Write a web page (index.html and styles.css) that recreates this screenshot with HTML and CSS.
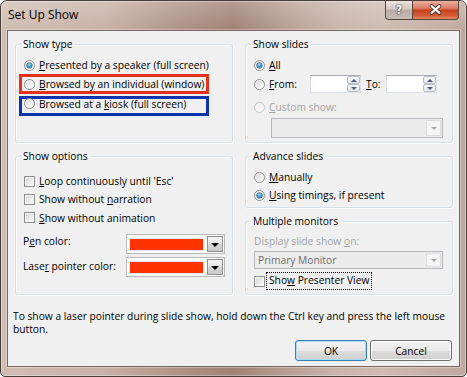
FILE: index.html
```html
<!DOCTYPE html>
<html>
<head>
<meta charset="utf-8">
<title>Set Up Show</title>
<link rel="stylesheet" href="styles.css">
</head>
<body>
<div class="window">
  <div class="titlebar">
    <span class="title">Set Up Show</span>
    <div class="caption-buttons">
      <div class="cbtn help">?</div>
      <div class="cbtn close">
        <svg width="46" height="18" viewBox="0 0 46 18">
          <path d="M19 5 L27 12 M27 5 L19 12" stroke="#4a2a20" stroke-width="4" stroke-linecap="round" fill="none"/>
          <path d="M19 5 L27 12 M27 5 L19 12" stroke="#ffffff" stroke-width="2.2" stroke-linecap="round" fill="none"/>
        </svg>
      </div>
    </div>
  </div>
  <div class="client">
    <div class="groups">
      <fieldset class="group show-type">
        <legend>Show type</legend>
        <div class="opt opt-1"><span class="radio checked"></span><span class="txt"><u>P</u>resented by a speaker (full screen)</span></div>
        <div class="opt opt-2 hl-red"><span class="radio"></span><span class="txt"><u>B</u>rowsed by an individual (window)</span></div>
        <div class="opt opt-3 hl-blue"><span class="radio"></span><span class="txt">Browsed at a <u>k</u>iosk (full screen)</span></div>
      </fieldset>

      <fieldset class="group show-slides">
        <legend>Show slides</legend>
        <div class="row row-all"><span class="radio checked"></span><span class="txt"><u>A</u>ll</span></div>
        <div class="row row-from">
          <span class="radio"></span>
          <span class="txt lbl-from"><u>F</u>rom:</span>
          <div class="spin"><div class="spin-btns"><span class="sb up"></span><span class="sb down"></span></div></div>
          <span class="txt lbl-to"><u>T</u>o:</span>
          <div class="spin"><div class="spin-btns"><span class="sb up"></span><span class="sb down"></span></div></div>
        </div>
        <div class="row row-custom disabled"><span class="radio dis"></span><span class="txt"><u>C</u>ustom show:</span></div>
        <div class="combo combo-custom"><span class="combo-text"></span><span class="combo-arrow"></span></div>
      </fieldset>

      <fieldset class="group show-options">
        <legend>Show options</legend>
        <div class="row chk-row first"><span class="check"></span><span class="txt"><u>L</u>oop continuously until 'Esc'</span></div>
        <div class="row chk-row"><span class="check"></span><span class="txt">Show without <u>n</u>arration</span></div>
        <div class="row chk-row third"><span class="check"></span><span class="txt"><u>S</u>how without animation</span></div>
        <div class="color-row pen">
          <span class="color-label">P<u>e</u>n color:</span>
          <div class="color-pick"><span class="swatch"></span><span class="pick-btn"></span></div>
        </div>
        <div class="color-row laser">
          <span class="color-label">Lase<u>r</u> pointer color:</span>
          <div class="color-pick"><span class="swatch"></span><span class="pick-btn"></span></div>
        </div>
      </fieldset>

      <div class="stack">
        <fieldset class="group advance">
          <legend>Advance slides</legend>
          <div class="row adv-1"><span class="radio"></span><span class="txt"><u>M</u>anually</span></div>
          <div class="row"><span class="radio checked"></span><span class="txt"><u>U</u>sing timings, if present</span></div>
        </fieldset>
        <fieldset class="group monitors">
          <legend>Multiple monitors</legend>
          <div class="disp-label disabled">Display slide show <u>o</u>n:</div>
          <div class="combo combo-monitor"><span class="combo-text">Primary Monitor</span><span class="combo-arrow"></span></div>
          <div class="row presenter"><span class="check"></span><span class="txt focus">Sho<u>w</u> Presenter View</span></div>
        </fieldset>
      </div>
    </div>
    <p class="note">To show a laser pointer during slide show, hold down the Ctrl key and press the left mouse button.</p>
    <div class="actions">
      <button class="btn btn-default">OK</button>
      <button class="btn btn-cancel">Cancel</button>
    </div>
  </div>
</div>
</body>
</html>
```
FILE: styles.css
```css
* { box-sizing: border-box; }
html, body { margin: 0; padding: 0; }
body {
  width: 467px;
  height: 377px;
  overflow: hidden;
  background: #ffffff;
  font-family: "Open Sans", "Noto Sans", sans-serif;
  font-size: 10.25px;
  color: #000;
}
u { text-decoration: underline; text-underline-offset: 1px; }

.window {
  width: 467px;
  height: 377px;
  border: 1px solid #4b3d38;
  border-radius: 7px 7px 5px 5px;
  padding: 0 6px 9px 6px;
  display: flex;
  flex-direction: column;
  background:
    linear-gradient(to bottom, rgba(255,255,255,0.22), rgba(255,255,255,0) 30px),
    linear-gradient(to right, #d0bdb4 0%, #c8b1a6 22%, #ad8f82 40%, #a08173 50%, #b59b8f 60%, #c9b4aa 72%, #cfbbb2 82%, #bfa89d 100%);
  box-shadow: inset 0 0 0 1px rgba(255,255,255,0.35);
}

.titlebar {
  height: 29px;
  display: flex;
  justify-content: space-between;
  align-items: flex-start;
}
.title {
  margin-left: 1px;
  padding-top: 6px;
  font-size: 12px;
  line-height: 16px;
  color: #000;
}
.caption-buttons {
  display: flex;
  margin-right: 1px;
}
.cbtn {
  height: 19px;
  border: 1px solid #5a4740;
  border-top: none;
  display: flex;
  align-items: center;
  justify-content: center;
}
.help {
  width: 27px;
  border-right: none;
  border-radius: 0 0 0 4px;
  background: linear-gradient(to bottom, #ece3df 0%, #d5c8c3 45%, #b9aaa4 50%, #c9bcb7 100%);
  color: #fff;
  font-family: "DejaVu Sans", sans-serif;
  font-weight: bold;
  font-size: 12px;
  text-shadow: 0 0 1px #333, 0 0 1px #333, 0 0 2px #555;
}
.close {
  width: 47px;
  border-radius: 0 0 4px 0;
  background: linear-gradient(to bottom, #eab0a2 0%, #dc7b62 40%, #c8401e 52%, #d45a36 80%, #e58a64 100%);
}

.client {
  flex: 1;
  background: #f0f0f0;
  border: 1px solid #7a675f;
  box-shadow: 0 0 0 1px rgba(255,255,255,0.3);
  padding: 6px 6px 0 7px;
  display: flex;
  flex-direction: column;
}

.groups {
  display: grid;
  grid-template-columns: 218px 208px;
  column-gap: 12px;
  row-gap: 6px;
}

.group {
  margin: 0;
  min-width: 0;
  padding: 0 6px 4px 8px;
  border: 1px solid #d5dfe5;
  border-radius: 3px;
  box-shadow: inset 1px 1px 0 #fff, 1px 1px 0 #fff;
}
.group legend {
  padding: 0 2px;
  margin-left: -3px;
  line-height: 15px;
  font-size: 10.25px;
}

.txt { white-space: nowrap; line-height: 14px; }

/* radios */
.radio {
  flex: none;
  width: 11px;
  height: 11px;
  margin-right: 4px;
  border-radius: 50%;
  border: 1px solid #8e8f8f;
  background: linear-gradient(135deg, #d6d6d6 0%, #f0f0f0 60%, #ffffff 100%);
  box-shadow: inset 0 0 0 1px rgba(255,255,255,0.6);
  position: relative;
}
.radio.checked::after {
  content: "";
  position: absolute;
  left: 2px;
  top: 2px;
  width: 5px;
  height: 5px;
  border-radius: 50%;
  background: radial-gradient(circle at 45% 35%, #b8ecff 0%, #3aa0d8 40%, #0f4c78 100%);
  box-shadow: 0 0 0 0.5px #1c4e70;
}
.radio.dis {
  border-color: #c9c9c9;
  background: #f4f4f4;
  box-shadow: none;
}

/* checkbox */
.check {
  flex: none;
  width: 11px;
  height: 11px;
  margin-right: 4px;
  border: 1px solid #8e8f8f;
  background: linear-gradient(135deg, #d2d2d2 0%, #eeeeee 60%, #fbfbfb 100%);
  box-shadow: inset 0 0 0 1px #f6f6f6;
}

/* show type rows */
.opt {
  display: flex;
  align-items: center;
  width: 190px;
  margin-left: -5px;
  padding-left: 2px;
  border: 3px solid transparent;
}
.opt-1 { margin-top: 4px; height: 18px; }
.opt-2 { height: 20px; }
.opt-3 { margin-top: 2px; height: 20px; padding-bottom: 5px; }
.hl-red { border-color: #e3321c; }
.hl-blue { border-color: #0d33ad; }

/* generic rows */
.row {
  display: flex;
  align-items: center;
  height: 18px;
}
.row-all { margin-top: 4px; }
.row-from { height: 20px; }
.row-custom { margin-top: 4px; }
.disabled { color: #a3a3a3; }

.lbl-from { width: 41px; }
.lbl-to { width: 20px; margin-left: 5px; }

.spin {
  flex: none;
  width: 51px;
  height: 18px;
  background: #fff;
  border: 1px solid #dbdfe6;
  border-top-color: #abadb3;
  display: flex;
  justify-content: flex-end;
}
.spin-btns {
  width: 13px;
  display: flex;
  flex-direction: column;
}
.sb {
  flex: 1;
  border: 1px solid #b7bfc8;
  border-radius: 2px;
  background: linear-gradient(to bottom, #f7f7f7, #e3e5e8);
  display: flex;
  align-items: center;
  justify-content: center;
}
.sb.up::after {
  content: "";
  border-left: 3px solid transparent;
  border-right: 3px solid transparent;
  border-bottom: 3px solid #4b5d7a;
}
.sb.down::after {
  content: "";
  border-left: 3px solid transparent;
  border-right: 3px solid transparent;
  border-top: 3px solid #4b5d7a;
}

/* combos */
.combo {
  display: flex;
  align-items: center;
  justify-content: space-between;
  border: 1px solid #b5b9bd;
  background: #ececec;
  padding: 1px;
}
.combo-custom {
  margin-top: 2px;
  margin-left: 17px;
  width: 172px;
  height: 20px;
}
.combo-monitor {
  margin-top: 3px;
  width: 189px;
  height: 18px;
}
.combo-text {
  padding-left: 2px;
  color: #6f6f6f;
  line-height: 14px;
  white-space: nowrap;
}
.combo-arrow {
  width: 15px;
  height: 100%;
  background: #f5f5f5;
  border: 1px solid #dcdcdc;
  display: flex;
  align-items: center;
  justify-content: center;
}
.combo-arrow::after {
  content: "";
  border-left: 3px solid transparent;
  border-right: 3px solid transparent;
  border-top: 3px solid #a8a8a8;
}

/* show options */
.chk-row.first { margin-top: 8px; }
.chk-row.third { height: 19px; }
.color-row {
  display: flex;
  align-items: flex-start;
  height: 20px;
  margin-left: -1px;
}
.color-row.pen { margin-top: 7px; }
.color-row.laser { margin-top: 3px; }
.color-label {
  width: 103px;
  line-height: 14px;
  white-space: nowrap;
}
.color-row.laser .color-label { padding-top: 2px; }
.color-pick {
  width: 99px;
  height: 20px;
  border: 1px solid #b9b9b9;
  background: #fff;
  display: flex;
  align-items: center;
  padding: 2px 1px 2px 2px;
}
.swatch {
  width: 75px;
  height: 13px;
  background: #ff3300;
  border: 1px solid #e8e8e8;
}
.pick-btn {
  width: 16px;
  height: 16px;
  margin-left: 3px;
  border: 1px solid #8f8f8f;
  background: linear-gradient(to bottom, #f4f4f4 0%, #e6e6e6 50%, #d6d6d6 51%, #cbcbcb 100%);
  display: flex;
  align-items: center;
  justify-content: center;
}
.pick-btn::after {
  content: "";
  margin-top: 1px;
  border-left: 4px solid transparent;
  border-right: 4px solid transparent;
  border-top: 4px solid #000;
}

/* right stack */
.stack {
  display: flex;
  flex-direction: column;
  gap: 6px;
}
.advance { padding-bottom: 3px; }
.adv-1 { margin-top: 4px; }
.monitors { padding-bottom: 5px; }
.disp-label {
  margin-top: 5px;
  line-height: 14px;
  white-space: nowrap;
}
.presenter {
  margin-top: 4px;
  height: 16px;
}
.presenter .check { margin-right: 2px; }
.focus {
  outline: 1px dotted #000;
  padding: 0 2px;
  height: 16px;
  line-height: 15px;
}

/* note & buttons */
.note {
  margin: 15px 0 0 -2px;
  width: 444px;
  line-height: 13px;
}
.actions {
  display: flex;
  justify-content: flex-end;
  gap: 3px;
  margin-top: 4px;
  margin-right: 1px;
}
.btn {
  height: 21px;
  font-family: "Open Sans", "Noto Sans", sans-serif;
  font-size: 10.25px;
  color: #000;
  border: 1px solid #707070;
  border-radius: 3px;
  background: linear-gradient(to bottom, #f2f2f2 0%, #ebebeb 50%, #dddddd 51%, #cfcfcf 100%);
  box-shadow: inset 0 0 0 1px #fbfbfb;
  padding: 0;
}
.btn-default {
  width: 72px;
  border-color: #3c7fb1;
  box-shadow: inset 0 0 0 1px #a7dcf3;
}
.btn-cancel { width: 82px; }
```
